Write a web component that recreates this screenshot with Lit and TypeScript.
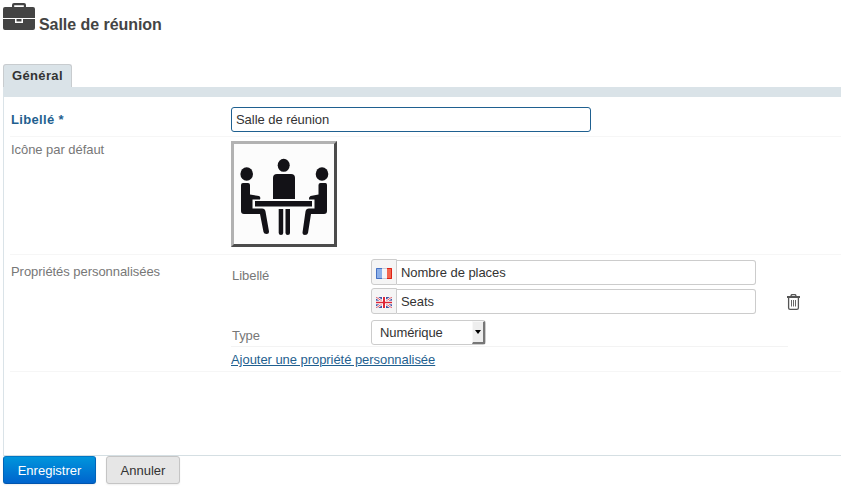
import { LitElement, html, css, svg } from "lit";
import { customElement } from "lit/decorators.js";

const briefcase = svg`<svg width="32" height="28" viewBox="0 0 32 28" fill="#444">
  <path d="M9 5V2a2 2 0 0 1 2-2h10a2 2 0 0 1 2 2v3h-2.200V2.200H11.200V5z"/>
  <path d="M2 4h28a2 2 0 0 1 2 2v9H0V6a2 2 0 0 1 2-2z"/>
  <path d="M0 16h12v4h8v-4h12v9a2 2 0 0 1-2 2H2a2 2 0 0 1-2-2z"/>
  <path d="M13.500 16h5v2.500h-5z"/></svg>`;

const meeting = svg`<svg width="100" height="100" viewBox="0 0 100 100" fill="#131217">
  <ellipse cx="49.700" cy="21.300" rx="6" ry="6.500"/>
  <ellipse cx="12.700" cy="30" rx="6.300" ry="6.700"/>
  <ellipse cx="88" cy="30" rx="6.300" ry="6.700"/>
  <path d="M39 55V34q0-4 4-4h14q4 0 4 4v21z"/>
  <path d="M21 57h57v5.500H21z"/>
  <path d="M44.700 65h4.500v24q0 2-2.200 2t-2.300-2zM51.500 65H56v24q0 2-2.200 2t-2.300-2z"/>
  <path d="M9 39h5q2 0 2 2v9.500l9 1.500q2 1 1 3.500h-7.500v9h9.500q3 0 3.500 3l3.500 20q0 2.500-2.500 2.500t-3-2L26 70H10q-3 0-3-3V41q0-2 2-2z"/>
  <path d="M91.500 39h-5q-2 0-2 2v9.500l-8 1.500q-2 1-1.500 3.500h5.500v9h-5.500q-3 0-3.500 3l-3 21q0 2.500 2.500 2.500t3-2L77 70h13q3 0 3-3V41q0-2-1.500-2z"/></svg>`;

const france = svg`<svg width="16" height="11" viewBox="0 0 16 11">
  <rect width="16" height="11" fill="#f4f5f8"/><rect width="6" height="11" fill="#8db0e8"/>
  <rect x="11" width="5" height="11" fill="#f4674f"/>
  <path d="M6 .5H.5v10H6" fill="none" stroke="#4672c4"/>
  <path d="M6 .5h5M6 10.500h5" stroke="#c9cbd6"/>
  <path d="M11 .5h4.500v10H11" fill="none" stroke="#dc2218"/></svg>`;

const britain = svg`<svg width="16" height="11" viewBox="0 0 16 11">
  <rect width="16" height="11" fill="#4256a6"/>
  <path d="M0 0l16 11M16 0L0 11" stroke="#fff" stroke-width="2.400"/>
  <path d="M0 0l16 11M16 0L0 11" stroke="#e15a66" stroke-width="1"/>
  <path d="M8 0v11" stroke="#fff" stroke-width="4"/><path d="M0 5.500h16" stroke="#fff" stroke-width="3.600"/>
  <path d="M8 0v11" stroke="#dd2637" stroke-width="2"/><path d="M0 5.500h16" stroke="#dd2637" stroke-width="1.500"/></svg>`;

const trash = svg`<svg width="13" height="16" viewBox="0 0 13 16" fill="none" stroke="#555">
  <path d="M4 2.500q0-2 1.500-2h2q1.500 0 1.500 2" stroke-width="1.300"/>
  <path d="M0 3h13" stroke-width="2"/>
  <path d="M1.600 4v10q0 1.300 1.500 1.300h6.800q1.500 0 1.500-1.300V4" stroke-width="1.300"/>
  <path d="M4.500 6v6.500M6.500 6v6.500M8.500 6v6.500" stroke="#666"/></svg>`;

@customElement("app-root")
export class AppRoot extends LitElement {
  static styles = css`
    :host { display: block; height: 488px; overflow: hidden; background: #fff;
      font: 13px/18px "Liberation Sans", Arial, sans-serif; letter-spacing: -0.05px; color: #333; }
    * { box-sizing: border-box; }
    svg { display: block; flex: none; }
    header { display: flex; height: 64px; padding: 3px 0 0 3px; gap: 4px; }
    h1 { margin: 13px 0 0; font-size: 16px; line-height: 18px; color: #444; letter-spacing: -0.05px; }
    .tabs { height: 33px; margin-left: 3px; border-bottom: 10px solid #dae3e8; }
    .tab { width: 69px; height: 23px; border: 1px solid #c8cccf; border-bottom: 0; border-radius: 3px 3px 0 0;
      background: #dae3e8; font-weight: bold; line-height: 21px; padding-left: 8px; letter-spacing: 0.35px; }
    main { height: 359px; margin-left: 3px; padding-left: 6px; border-left: 1px solid #dae3e8; border-bottom: 1px solid #d5dfe3; }
    .row { display: flex; border-bottom: 1px solid #f6f6f6; padding-left: 1px; }
    .name { width: 220px; flex: none; color: #777; }
    .first { height: 40px; padding-top: 10px; }
    .second { height: 118px; padding-top: 4px; }
    .third { height: 117px; padding-top: 4px; }
    .third > .name { padding-top: 4px; }
    .required { color: #1f5f8f; font-weight: bold; padding-top: 4px; letter-spacing: 0.35px; }
    input { font: inherit; letter-spacing: inherit; color: #333; background: #fff; height: 25px; padding: 0 4px;
      border: 1px solid #ccc; border-radius: 3px; outline: 0; margin: 0; }
    .title { width: 360px; border-color: #1f6090; }
    .picture { width: 106px; height: 106px; border: 3px solid; border-color: #b2b2b2 #4c4c4c #4c4c4c #b2b2b2; background: #fcfcfc; }
    .property { width: 557px; height: 88px; display: flex; border-bottom: 1px solid #f3f3f3; }
    .fields { width: 525px; }
    .line { display: flex; }
    .label { width: 140px; padding: 8px 0 0 1px; color: #777; flex: none; }
    .type { padding-top: 9px; }
    .pairs { padding-top: 1px; }
    .pair { display: flex; margin-bottom: 4px; height: 25px; }
    .flag { width: 26px; height: 26px; margin-top: -1px; border: 1px solid #ccc; border-radius: 3px 0 0 3px; background: #f5f5f5;
      display: grid; place-items: center; padding-top: 3px; }
    .pair input { width: 359px; border-left: 0; border-radius: 0 3px 3px 0; }
    .select { width: 115px; height: 25px; border: 1px solid #ccc; border-radius: 3px; display: flex; justify-content: space-between;
      line-height: 23px; padding-left: 8px; margin-top: 2px; letter-spacing: -0.1px; }
    .arrow { width: 13px; height: 23px; background: #eee; border: solid; border-width: 1px 2px 2px 1px; border-color: #f8f8f8 #777 #777 #f8f8f8;
      display: grid; place-items: center; }
    .arrow::before { content: ""; border: 3.5px solid transparent; border-top: 4px solid #000; border-bottom: 0; }
    .bin { padding: 35px 0 0 31px; }
    a { display: block; color: #1f5f8f; margin-top: 4px; text-decoration: underline; white-space: nowrap; }
    footer { display: flex; gap: 10px; margin-left: 3px; }
    button { font: inherit; letter-spacing: 0; height: 28px; padding: 2px 0 0; border: 1px solid #c5c5c5; border-radius: 3px;
      background: #e6e6e6; color: #333; width: 74px; box-shadow: 0 1px 2px #0001; }
    .save { width: 93px; color: #fff; background: linear-gradient(#0095dc, #0064cd); border-color: #0077c5 #0064b8 #0055ae; }
  `;

  private field(flag: unknown, value: string) {
    return html`<div class="pair"><span class="flag">${flag}</span><input .value=${value}></div>`;
  }

  render() {
    return html`
      <header>${briefcase}<h1>Salle de réunion</h1></header>
      <nav class="tabs"><div class="tab">Général</div></nav>
      <main>
        <div class="row first"><label class="name required">Libellé *</label><input class="title" .value=${"Salle de réunion"}></div>
        <div class="row second"><span class="name">Icône par défaut</span><div class="picture">${meeting}</div></div>
        <div class="row third">
          <span class="name">Propriétés personnalisées</span>
          <div>
            <div class="property">
              <div class="fields">
                <div class="line"><span class="label">Libellé</span>
                  <div class="pairs">${this.field(france, "Nombre de places")}${this.field(britain, "Seats")}</div></div>
                <div class="line"><span class="label type">Type</span>
                  <div class="select"><span>Numérique</span><span class="arrow"></span></div></div>
              </div>
              <div class="bin">${trash}</div>
            </div>
            <a>Ajouter une propriété personnalisée</a>
          </div>
        </div>
      </main>
      <footer><button class="save">Enregistrer</button><button>Annuler</button></footer>`;
  }
}
